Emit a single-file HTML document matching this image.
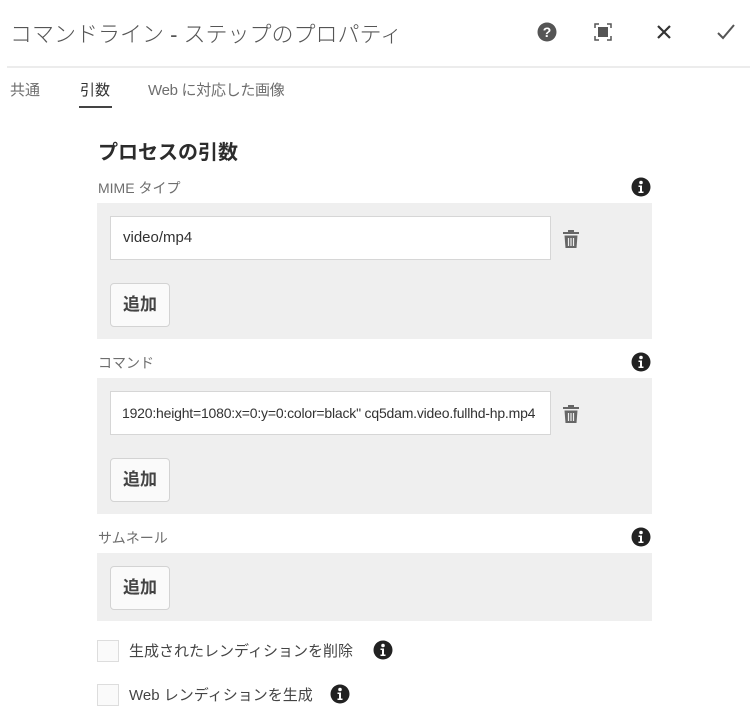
<!DOCTYPE html>
<html><head><meta charset="utf-8"><style>
*{margin:0;padding:0;box-sizing:border-box}
body{width:750px;height:724px;background:#fff;position:relative;overflow:hidden;font-family:"Liberation Sans","Noto Sans CJK JP",sans-serif;color:#4b4b4b}
.a{position:absolute;white-space:nowrap}
.box{position:absolute;left:97px;width:555px;background:#efefef}
.inp{position:absolute;left:110px;width:441px;height:44px;background:#fff;border:1px solid #d6d6d6;font-size:15px;color:#323232;line-height:42px;padding-left:12px;overflow:hidden;white-space:nowrap}
.btn{position:absolute;left:110px;width:60px;height:44px;background:#fafafa;border:1px solid #d3d3d3;border-radius:4px;font-size:17px;color:#444;text-align:center;line-height:42px;font-weight:bold}
.lbl{font-size:14px;color:#6e6e6e}
.cb{position:absolute;left:97px;width:22px;height:22px;border:1px solid #ddd;background:#fafafa}
</style></head><body>
<div class="a" style="left:10px;top:17px;font-size:22px;color:#555;font-weight:300">コマンドライン - ステップのプロパティ</div>
<svg class="a" style="left:537px;top:22px" width="20" height="20" viewBox="0 0 20 20"><circle cx="10" cy="10" r="9.5" fill="#555"/><text x="10" y="15" text-anchor="middle" font-size="14" font-weight="bold" fill="#fff" font-family="Liberation Sans">?</text></svg>
<svg class="a" style="left:594px;top:23px" width="18" height="18" viewBox="0 0 18 18" fill="none" stroke="#555" stroke-width="1.5"><path d="M1 5V1h4M13 1h4v4M17 13v4h-4M5 17H1v-4"/><rect x="4" y="4" width="10" height="10" fill="#555" stroke="none"/></svg>
<svg class="a" style="left:656px;top:24px" width="16" height="16" viewBox="0 0 16 16" stroke="#333" stroke-width="2.2"><path d="M2 2L14 14M14 2L2 14"/></svg>
<svg class="a" style="left:717px;top:24px" width="18" height="16" viewBox="0 0 18 16" fill="none" stroke="#555" stroke-width="2"><path d="M1 9l5 5L17 1"/></svg>
<div class="a" style="left:7px;top:66px;width:743px;height:2px;background:#ececec"></div>
<div class="a" style="left:10px;top:79px;font-size:15px;color:#6e6e6e">共通</div>
<div class="a" style="left:80px;top:79px;font-size:15px;color:#333">引数</div>
<div class="a" style="left:79px;top:106px;width:33px;height:2px;background:#444"></div>
<div class="a" style="left:148px;top:79px;font-size:15px;color:#6e6e6e;letter-spacing:-0.3px">Web に対応した画像</div>
<div class="a" style="left:98px;top:136px;font-size:20px;font-weight:bold;color:#2c2c2c">プロセスの引数</div>

<svg width="0" height="0" style="position:absolute"><defs>
<symbol id="i" viewBox="0 0 20 20"><circle cx="10" cy="10" r="9.5" fill="#222"/><circle cx="10" cy="5.5" r="1.8" fill="#fff"/><path d="M7.5 8.5h3.5v6h1.5v1.5h-5v-1.5h1.5v-4.5h-1.5z" fill="#fff"/></symbol>
<symbol id="t" viewBox="0 0 18 20"><path d="M6 1h6v2h5v2H1V3h5z" fill="#666"/><path d="M2.5 6.5h13l-1 12.5h-11z" fill="#666"/><path d="M6.5 9v8M9 9v8M11.5 9v8" stroke="#efefef" stroke-width="1.2"/></symbol>
</defs></svg>

<div class="a lbl" style="left:98px;top:178px">MIME タイプ</div>
<svg class="a" style="left:631px;top:177px" width="20" height="20"><use href="#i"/></svg>
<div class="box" style="top:203px;height:136px"></div>
<div class="inp" style="top:216px">video/mp4</div>
<svg class="a" style="left:562px;top:229px" width="18" height="20"><use href="#t"/></svg>
<div class="btn" style="top:283px">追加</div>

<div class="a lbl" style="left:98px;top:353px">コマンド</div>
<svg class="a" style="left:631px;top:352px" width="20" height="20"><use href="#i"/></svg>
<div class="box" style="top:378px;height:136px"></div>
<div class="inp" style="top:391px;padding-left:11px;font-size:14px;letter-spacing:-0.2px">1920:height=1080:x=0:y=0:color=black" cq5dam.video.fullhd-hp.mp4</div>
<svg class="a" style="left:562px;top:404px" width="18" height="20"><use href="#t"/></svg>
<div class="btn" style="top:458px">追加</div>

<div class="a lbl" style="left:98px;top:528px">サムネール</div>
<svg class="a" style="left:631px;top:527px" width="20" height="20"><use href="#i"/></svg>
<div class="box" style="top:553px;height:68px"></div>
<div class="btn" style="top:566px">追加</div>

<div class="cb" style="top:640px"></div>
<div class="a" style="left:129px;top:640px;font-size:15px;color:#444">生成されたレンディションを削除</div>
<svg class="a" style="left:373px;top:640px" width="20" height="20"><use href="#i"/></svg>
<div class="cb" style="top:684px"></div>
<div class="a" style="left:129px;top:684px;font-size:15px;color:#444">Web レンディションを生成</div>
<svg class="a" style="left:330px;top:684px" width="20" height="20"><use href="#i"/></svg>
</body></html>
